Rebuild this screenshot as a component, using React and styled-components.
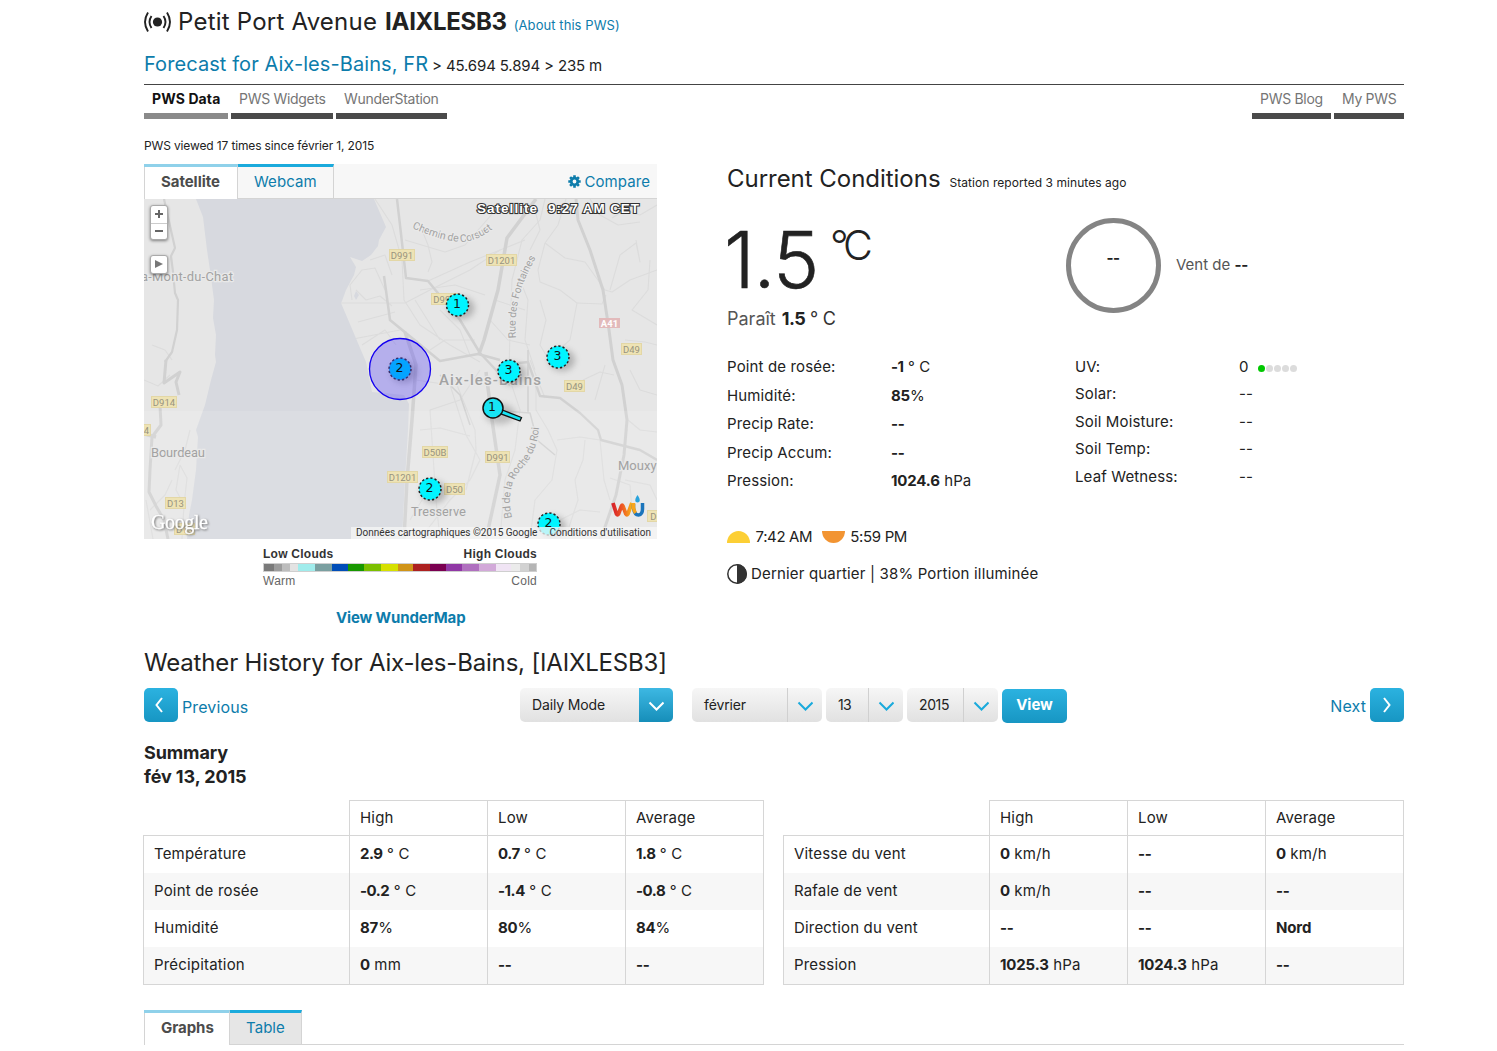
import React from "react";
import styled, { createGlobalStyle } from "styled-components";

const Global = createGlobalStyle`
  * { box-sizing: border-box; }
  body { margin: 0; background: #fff; color: #222; font-family: Inter, "Noto Sans", "Liberation Sans", sans-serif; font-size: 15px; white-space: nowrap; overflow: hidden; }
  a { color: #0d7cab; text-decoration: none; }
  h1, h2, h3 { margin: 0; font-weight: 400; }
`;

const Page = styled.main`
  width: 1260px;
  height: 1051px;
  margin-left: 144px;
  overflow: visible;
`;

/* Header */
const Station = styled.h1`
  display: flex;
  align-items: baseline;
  height: 44px;
  line-height: 43px;
  font-size: 24px;
  letter-spacing: 0.22px;
  svg { align-self: flex-start; margin: 11px 7px 0 0; flex: none; }
  b { letter-spacing: -0.3px; margin-left: 8px; }
  a { font-size: 13px; letter-spacing: 0.07px; margin-left: 7px; }
`;
const Place = styled.div`
  display: flex;
  align-items: baseline;
  height: 41px;
  line-height: 40px;
  border-bottom: 1px solid #444;
  font-size: 15px;
  letter-spacing: -0.15px;
  a { font-size: 20px; letter-spacing: 0.08px; margin-right: 4px; }
`;
const Nav = styled.nav`
  display: flex;
  gap: 3px;
  height: 34px;
`;
const NavItem = styled.a`
  width: ${(p) => p.$w}px;
  height: 34px;
  padding-left: 8px;
  line-height: 28px;
  font-size: 14px;
  font-weight: ${(p) => (p.$on ? 700 : 400)};
  letter-spacing: ${(p) => (p.$on ? 0.1 : -0.3)}px;
  border-bottom: 6px solid ${(p) => (p.$on ? "#8a8a8a" : "#4a4a4a")};
  && { color: ${(p) => (p.$on ? "#111" : "#757575")}; }
  margin-left: ${(p) => (p.$push ? "auto" : "0")};
`;
const Viewed = styled.p`
  margin: 0;
  height: 45px;
  padding-top: 18px;
  line-height: 18px;
  font-size: 12px;
  letter-spacing: -0.14px;
`;

/* Tabs */
const Tabs = styled.div`
  display: flex;
  height: 35px;
  background: ${(p) => (p.$tint ? "#f7f7f7" : "#fff")};
  border-bottom: 1px solid #d4d4d4;
`;
const Tab = styled.a`
  width: ${(p) => p.$w}px;
  height: ${(p) => (p.$on ? 35 : 34)}px;
  padding-left: ${(p) => (p.$on ? 17 : 16)}px;
  line-height: 29px;
  font-weight: ${(p) => (p.$on ? 700 : 400)};
  letter-spacing: ${(p) => (p.$on ? -0.05 : 0.06)}px;
  background: ${(p) => (p.$on ? "#fff" : p.$bg)};
  border-top: 3px solid ${(p) => (p.$on ? "#8fd1ea" : "#1aaadc")};
  border-right: 1px solid #d4d4d4;
  box-shadow: ${(p) => (p.$on ? "inset 1px 0 #d4d4d4" : "none")};
  && { color: ${(p) => (p.$on ? "#4c4c4c" : "#0d7cab")}; }
`;
const Compare = styled.a`
  display: flex;
  align-items: center;
  gap: 3px;
  margin: 0 7px 0 auto;
  letter-spacing: 0.09px;
`;

/* Main columns */
const Columns = styled.section`
  display: grid;
  grid-template-columns: 513px 1fr;
  column-gap: 70px;
  height: 474px;
`;
const MapBox = styled.div`
  position: relative;
  height: 340px;
  overflow: hidden;
  svg { display: block; }
`;
const ZoomControl = styled.div`
  position: absolute;
  left: 6px;
  top: ${(p) => p.$top}px;
  width: 18px;
  border: 1px solid #aaa;
  border-radius: 3px;
  background: #fff;
  box-shadow: 0 1px 3px rgba(0, 0, 0, 0.45);
  div { height: 16.5px; display: grid; place-items: center; }
  div + div { border-top: 1px solid #ccc; }
`;
const Attribution = styled.div`
  position: absolute;
  right: 0;
  bottom: 0;
  width: 306px;
  height: 12px;
  display: flex;
  gap: 12px;
  padding-left: 5px;
  line-height: 12px;
  background: rgba(245, 245, 245, 0.75);
  font-family: Roboto, "Liberation Sans", sans-serif;
  font-size: 10px;
  letter-spacing: 0.01px;
  color: #333;
`;
const Legend = styled.div`
  width: 274px;
  margin: 8px 0 0 119px;
  font-family: "Liberation Sans", sans-serif;
  font-size: 12px;
  color: #555;
`;
const LegendRow = styled.div`
  display: flex;
  justify-content: space-between;
  height: ${(p) => (p.$bold ? 16 : 14)}px;
  line-height: ${(p) => (p.$bold ? 15 : 19)}px;
  font-weight: ${(p) => (p.$bold ? 700 : 400)};
  font-size: 12px;
  letter-spacing: 0.25px;
  color: ${(p) => (p.$bold ? "#333" : "#666")};
`;
const Scale = styled.div`
  display: flex;
  height: 9px;
  border: 1px solid #cfcfcf;
`;
const Swatch = styled.i`
  flex: ${(p) => p.$n} 0 0;
  background: ${(p) => p.$c};
`;
const MapLink = styled.a`
  display: block;
  margin: 22px 0 0 192px;
  line-height: 20px;
  font-weight: 700;
  letter-spacing: -0.14px;
`;

/* Conditions */
const CondTitle = styled.h2`
  display: flex;
  align-items: baseline;
  gap: 9px;
  height: 36px;
  line-height: 30px;
  font-size: 24px;
  letter-spacing: -0.03px;
  small { font-size: 12px; letter-spacing: 0.06px; }
`;
const Now = styled.div`
  display: grid;
  grid-template-columns: 339px 95px 1fr;
  height: 153px;
`;
const Temp = styled.div`
  display: flex;
  height: 108px;
  padding-top: 9px;
  line-height: 101px;
  font-size: 78px;
  font-weight: 300;
  letter-spacing: -1.3px;
  margin-left: -3px;
  -webkit-text-stroke: 0.6px #222;
`;
const Unit = styled.span`
  padding: 0 0 0 12px;
  font-size: 41px;
  font-weight: 300;
  line-height: 73px;
  letter-spacing: -5.3px;
  -webkit-text-stroke: 0;
`;
const Feels = styled.div`
  line-height: 22px;
  font-size: 18px;
  color: #555;
  b { letter-spacing: -0.6px; color: #222; margin-left: 1px; }
  span { color: #333; letter-spacing: -0.25px; }
`;
const Dial = styled.div`
  width: 95px;
  height: 95px;
  margin-top: 18px;
  border: 5px solid #848484;
  border-radius: 50%;
  text-align: center;
  line-height: 69px;
  padding-right: 1px;
  font-weight: 700;
  letter-spacing: -0.5px;
`;
const Wind = styled.div`
  padding: 55px 0 0 15px;
  line-height: 20px;
  color: #555;
  b { color: #222; letter-spacing: -0.3px; }
`;
const Readings = styled.div`
  display: grid;
  grid-template-columns: 348px 1fr;
  height: 174px;
`;
const ReadingList = styled.dl`
  display: grid;
  grid-template-columns: 164px 1fr;
  grid-auto-rows: ${(p) => p.$row}px;
  align-content: start;
  align-items: center;
  margin: ${(p) => p.$up}px 0 0;
  dt { letter-spacing: 0.14px; }
  dd { margin: 0; letter-spacing: 0.1px; display: flex; align-items: center; white-space: pre; }
`;
const Num = styled.b`
  letter-spacing: ${(p) => (p.$tight ? -0.45 : -0.15)}px;
`;
const Dots = styled.span`
  display: flex;
  gap: 1px;
  margin: 4px 0 0 9px;
`;
const Dot = styled.i`
  width: 7px;
  height: 7px;
  border-radius: 50%;
  background: ${(p) => (p.$on ? "#00c800" : "#dcdcdc")};
`;
const Astro = styled.div`
  display: flex;
  align-items: center;
  height: 20px;
  line-height: 18px;
  letter-spacing: ${(p) => (p.$moon ? 0.17 : -0.35)}px;
  margin-bottom: 17px;
  svg { flex: none; margin-right: ${(p) => (p.$moon ? 4 : 5.5)}px; }
  span { margin-right: 9.5px; }
`;

/* History */
const HistTitle = styled.h2`
  height: 50px;
  line-height: 50px;
  font-size: 24px;
  letter-spacing: -0.17px;
`;
const Toolbar = styled.div`
  display: flex;
  height: 54px;
  align-items: flex-start;
`;
const Step = styled.a`
  display: flex;
  gap: 4px;
  width: ${(p) => p.$w}px;
  justify-content: ${(p) => (p.$end ? "flex-end" : "flex-start")};
  margin-left: ${(p) => (p.$end ? "auto" : "0")};
  font-size: 16px;
  letter-spacing: 0.12px;
  line-height: ${(p) => (p.$end ? 36 : 38)}px;
`;
const StepIcon = styled.span`
  display: grid;
  place-items: center;
  width: 34px;
  height: 34px;
  padding-right: ${(p) => (p.$back ? 4 : 0)}px;
  border-radius: 5px;
  background: linear-gradient(#2bb2e0, #1796c3);
`;
const Select = styled.div`
  display: flex;
  justify-content: space-between;
  width: ${(p) => p.$w}px;
  height: 34px;
  margin-right: ${(p) => p.$gap}px;
  padding-left: 12px;
  border-radius: 5px;
  overflow: hidden;
  background: linear-gradient(#f6f6f6, #e1e1e1);
  font-size: 14px;
  line-height: 34px;
  letter-spacing: ${(p) => p.$ls}px;
`;
const Arrow = styled.span`
  display: grid;
  place-items: center;
  width: ${(p) => (p.$blue ? 34 : 35)}px;
  background: ${(p) => (p.$blue ? "linear-gradient(#3db8e3, #168eb9)" : "none")};
  border-left: ${(p) => (p.$blue ? "0" : "1px solid #d0d0d0")};
`;
const ViewBtn = styled.button`
  width: 65px;
  height: 34px;
  margin: 1px 0 0;
  padding: 0 0 3px;
  border: 0;
  border-radius: 5px;
  background: linear-gradient(#2bb2e0, #1796c3);
  color: #fff;
  font: 700 15px Inter, sans-serif;
`;
const Summary = styled.h3`
  height: 58px;
  line-height: 24px;
  font-size: 18px;
  font-weight: 700;
  letter-spacing: -0.1px;
  margin-top: -1px;
`;
const Tables = styled.div`
  display: flex;
  gap: 19px;
  margin: 1px 0 0 -1px;
  height: 210px;
`;
const Table = styled.table`
  width: 621px;
  height: 185px;
  table-layout: fixed;
  border-collapse: collapse;
  font-size: 15px;
  letter-spacing: 0.18px;
  th, td { padding: 0 0 2px 10px; text-align: left; font-weight: 400; border: solid #d6d6d6; border-width: 0 1px; }
  thead th { border-width: 1px; height: 35px; }
  thead th:first-child { border-top: 0; border-left: 0; width: 206px; }
  tbody tr { height: 37px; }
  tbody tr:nth-child(even) { background: #f7f7f7; }
  tbody tr:last-child td { border-bottom-width: 1px; }
`;

const Chevron = ({ d, c = "#fff" }) => (
  <svg width="16" height="16" viewBox="0 0 16 16" fill="none" stroke={c} strokeWidth="2"><path d={d} /></svg>
);
const DOWN = "M1.500 5.500 8.500 12.500l7-7";

const MINOR = [
  "M153 539 146 500M144 380 158 386 170 375M152 345 165 350 172 360M180 465 176 490 184 505 182 539M180 465 187 478 184 505M150 510 165 495 172 480M190 430 185 450 175 470",
  "M341 303 405 303 430 290 470 270 500 250M352 300 350 285 362 270 375 268 385 290M358 322 395 312M348 340 400 330M356 290 366 300 380 296 392 306M362 345 385 330 396 345M370 260 385 255 392 275",
  "M375 199 392 225 402 260 404 300 420 325 450 345 480 362M420 225 428 245 432 262 428 272M405 240 445 252 465 245 500 205M428 281 470 262 525 240M415 300 440 340M420 290 455 285 485 295",
  "M545 199 540 220 522 240 512 280 510 330 509 372M566 199 558 225 545 243 538 270 540 282 560 290 577 303 570 340 556 352M545 243 565 258 585 262 605 290 612 292 630 280 657 270M610 290 620 255 636 243 640 262 636 240M657 205 640 215 625 210 612 218",
  "M520 280 528 300 525 340 535 370M540 300 546 320 540 345 552 365M577 303 602 304 606 295M530 250 540 230 535 210M590 199 600 215 618 225 640 222M650 260 648 290 632 310 657 325M625 340 645 342 657 345",
  "M480 370 460 400 430 410 432 440 436 500 440 539M416 380 450 385 466 435 480 460 470 480 450 500 420 539M455 380 475 430 476 450 466 490M420 430 440 428 470 436M425 480 422 500 410 520",
  "M510 380 520 410 515 450 505 480 500 539M536 380 536 410 548 430 557 450 552 480 535 500 530 539M557 440 580 437 600 440M585 440 583 460 575 480 578 500 565 539M600 440 604 480 610 500M625 480 650 485 657 500M605 365 595 400M545 398 530 360M610 478 630 485 632 510",
  "M440 310 460 330 470 355M430 350 445 340 475 340M495 300 525 310M490 320 508 340 530 345M583 380 600 372 614 375M630 370 640 390 657 395M628 420 640 430 657 432M560 520 580 510 600 512",
];
const MAJOR = [
  ["M164 199 168 217 175 248 171 256 173 272 175 293 178 300 177 330 172 352 165 362", 2.2],
  ["M166 360 164 383 180 372 176 382 179 395M160 405 161 425 152 437 150 470 149 492 156 506 164 520 168 539", 3],
  ["M144 434 156 437", 3.5],
  ["M536 199 507 238 498 290 484 340 479 354", 3.5],
  ["M397 199 400 225 406 278 428 281 460 320 480 353 510 385", 2.5],
  ["M384 276 390 320 412 338 440 361 478 354 500 360", 2.5],
  ["M405 332 416 365 412 420 407 480 404 539", 3.5],
  ["M576 199 578 220 590 250 603 290 609 330 613 360 622 385 627 420 624 455 616 495 604 530 600 539", 3],
  ["M486 372 492 420 500 475 492 512 486 539", 3.5],
  ["M500 365 528 362 540 396 560 398 580 413 598 430 601 440 640 450 657 460", 2.4],
  ["M528 350 528 413M492 410 530 413 537 440 555 455", 1.5],
  ["M440 375 460 395 470 425", 1.5],
];
const ROADS = [
  ["D991", 389, 249, 26], ["D1201", 486, 254, 31], ["D991", 431, 293, 27], ["D49", 621, 343, 21], ["D49", 564, 380, 21],
  ["D914", 151, 396, 26], ["4", 142, 424, 9], ["D50B", 422, 446, 26], ["D991", 485, 451, 25], ["D1201", 387, 471, 31],
  ["D50", 444, 483, 21], ["D13", 165, 497, 21], ["D13", 174, 523, 21], ["D5", 647, 510, 18],
];
const MARKS = [["1", 457.5, 305], ["3", 558, 357], ["3", 509, 371], ["2", 430, 489], ["2", 549, 524]];

const MapLabel = styled.text`
  font-family: Roboto, sans-serif;
  font-size: ${(p) => p.$s || 13}px;
  font-weight: ${(p) => p.$w || 400};
  fill: #a2a2a2;
  stroke: #e9e9e9;
  stroke-width: 2.5px;
  paint-order: stroke;
`;
const RoadText = styled.text`
  font-family: Roboto, sans-serif;
  font-size: 9.5px;
  text-anchor: middle;
  fill: ${(p) => p.$c || "#98937f"};
  font-weight: ${(p) => (p.$c ? 700 : 400)};
`;
const MarkText = styled.text`
  font-family: "DejaVu Sans", sans-serif;
  font-size: 12.5px;
  text-anchor: middle;
  fill: #111;
`;
const Stamp = styled.text`
  font-family: "Liberation Sans", sans-serif;
  font-size: 13.5px;
  font-weight: 700;
  fill: #fff;
  stroke: #333;
  stroke-width: 2.2px;
  paint-order: stroke;
`;
const Wordmark = styled.text`
  font-family: "Liberation Serif", serif;
  font-size: 20px;
  fill: #fff;
  stroke: #fff;
  stroke-width: 0.3px;
  filter: drop-shadow(1px 1px 1px #777);
`;

function Mark({ n, x, y, fill = "#00f4ff" }) {
  return (
    <g>
      <ellipse cx={x + 4} cy={y + 3} rx="13" ry="11" fill="#555" opacity="0.35" filter="url(#soft)" />
      <circle cx={x} cy={y} r="11" fill={fill} stroke="#222" strokeWidth="1.500" strokeDasharray="2.200 2.120" />
      <MarkText x={x - 0.5} y={y + 3}>{n}</MarkText>
    </g>
  );
}

function AreaMap() {
  return (
    <svg width="513" height="340" viewBox="144 199 513 340">
      <defs>
        <filter id="soft" x="-50%" y="-50%" width="200%" height="200%"><feGaussianBlur stdDeviation="3" /></filter>
        <path id="corsuet" d="M412 228Q438 240 460 242Q476 242 494 228" />
        <path id="fontaines" d="M516 338Q512 296 537 256" />
        <path id="roche" d="M512 518Q504 484 526 464Q538 448 539 426" />
        <linearGradient id="warm"><stop offset="0" stopColor="#d8232a" /><stop offset=".5" stopColor="#ee5a24" /><stop offset="1" stopColor="#f9b41a" /></linearGradient>
      </defs>
      <path fill="#e6e6e6" d="M144 199h513v340H144z" />
      <g fill="none" stroke="#dcdcdc" strokeWidth="1.100" strokeLinejoin="round">{MINOR.map((d) => <path key={d} d={d} />)}</g>
      <g fill="none" stroke="#d1d1d1" strokeLinejoin="round">{MAJOR.map(([d, w]) => <path key={d} d={d} strokeWidth={w} />)}</g>
      <path fill="#d7d9df" d="M196 199 203 217 207 250 210 270 214 300 213 318 216 335 215 355 216 362 211 380 205 405 196 430 198 437 196 470 192 500 189 515 187 539H402L405 480 408 430 409 404 404 395 372 392 366 362 341 303 342 301 346 290 354 275 356 267 350 257 362 261 371 255 378 246 379 240 386 227 374 199Z" />
      <path fill="#d7d9df" d="m356 291 3 4-3 5-2-4z" />
      <path fill="#fff" opacity=".12" d="M144 411h513v128H144z" />
      {ROADS.map(([t, x, y, w]) => (
        <g key={t + x}>
          <rect x={x + 0.5} y={y + 0.5} width={w - 1} height="11" fill="#eee3b4" stroke="#e3d7a6" />
          <RoadText x={x + w / 2} y={y + 9.5}>{t}</RoadText>
        </g>
      ))}
      <rect x="599" y="318" width="21" height="10" fill="#e2babb" />
      <RoadText $c="#fff" x="609.500" y="326.500">A41</RoadText>
      <MapLabel x="141" y="280.500" textLength="92">a-Mont-du-Chat</MapLabel>
      <MapLabel $s={15} $w={500} x="439" y="384.500" textLength="102">Aix-les-Bains</MapLabel>
      <MapLabel x="151" y="457" textLength="54">Bourdeau</MapLabel>
      <MapLabel x="411" y="515.500" textLength="55">Tresserve</MapLabel>
      <MapLabel x="618" y="469.500">Mouxy</MapLabel>
      <MapLabel $s={10.5}><textPath href="#corsuet" textLength="86">Chemin de Corsuet</textPath></MapLabel>
      <MapLabel $s={10.5}><textPath href="#fontaines" textLength="84">Rue des Fontaines</textPath></MapLabel>
      <MapLabel $s={10.5}><textPath href="#roche" textLength="98">Bd de la Roche du Roi</textPath></MapLabel>
      {MARKS.map(([n, x, y]) => <Mark key={x} n={n} x={x} y={y} />)}
      <Mark n="2" x={400} y={369} fill="#00b4ff" />
      <circle cx="400" cy="369" r="30.500" fill="#5a48f5" fillOpacity=".35" stroke="#1400f0" strokeWidth="1.300" />
      <circle cx="400" cy="369" r="10" fill="#00a8ff" opacity=".85" />
      <MarkText x="399.500" y="372">2</MarkText>
      <ellipse cx="500" cy="414" rx="15" ry="10" fill="#555" opacity=".3" filter="url(#soft)" />
      <path d="m501 409.500 20.500 8-1.500 3.500-20-7.500z" fill="#16e4f4" stroke="#111" strokeWidth="1.300" />
      <circle cx="493" cy="408" r="10" fill="#16e4f4" stroke="#111" strokeWidth="1.500" />
      <MarkText x="492" y="411">1</MarkText>
      <Stamp x="477" y="213" textLength="60">Satellite</Stamp>
      <Stamp x="548" y="213" textLength="91">9:27 AM CET</Stamp>
      <Wordmark x="151" y="529" textLength="57">Google</Wordmark>
      <path d="m613 503 3.500 11q1 1.500 2 0l3-8q.7-1.500 1.400 0l3 8q1 1.500 2 0l4-11" fill="none" stroke="url(#warm)" strokeWidth="3.800" strokeLinejoin="round" />
      <path d="M633.500 504v4q1 7 5 7 4-.5 4-6v-6" fill="none" stroke="#1b75bb" strokeWidth="3.500" />
      <path d="M633.500 503v4q.5 4 2 6" fill="none" stroke="#f9a51a" strokeWidth="3.500" />
      <path d="M637.500 495q3 4 2 6.500-2 2-4 0-1-2.500 2-6.500z" fill="#29a3dc" />
    </svg>
  );
}

const SCALE = [[10, "#7a7a7a"], [8, "#9c9c9c"], [8, "#bdbdbd"], [8.5, "#e3e3e3"], [16.5, "#a0ecec"], [17, "#7a9fa0"], [16.5, "#004db8"], [16, "#189700"], [17, "#7bbf00"], [16.5, "#d6e000"], [16, "#d09418"], [16.5, "#ad2020"], [16.5, "#7a0050"], [16, "#9038a5"], [17, "#b070bf"], [16.5, "#d2a9d9"], [15.5, "#f0e4f4"], [9, "#ebebeb"], [8.5, "#d2d2d2"], [7.5, "#b5b5b5"]];

const deg = " ° C";
const T1 = [
  ["Température", ["2.9", deg], ["0.7", deg], ["1.8", deg]],
  ["Point de rosée", ["-0.2", deg], ["-1.4", deg], ["-0.8", deg]],
  ["Humidité", ["87", "%"], ["80", "%"], ["84", "%"]],
  ["Précipitation", ["0", " mm"], ["--", ""], ["--", ""]],
];
const T2 = [
  ["Vitesse du vent", ["0", " km/h"], ["--", ""], ["0", " km/h"]],
  ["Rafale de vent", ["0", " km/h"], ["--", ""], ["--", ""]],
  ["Direction du vent", ["--", ""], ["--", ""], ["Nord", ""]],
  ["Pression", ["1025.3", " hPa"], ["1024.3", " hPa"], ["--", ""]],
];
const Value = ({ v: [n, u] }) => <><Num $tight={u === deg}>{n}</Num>{u}</>;

function SummaryTable({ rows }) {
  return (
    <Table>
      <thead><tr><th /><th>High</th><th>Low</th><th>Average</th></tr></thead>
      <tbody>
        {rows.map(([name, ...vals]) => (
          <tr key={name}><td>{name}</td>{vals.map((v, i) => <td key={i}><Value v={v} /></td>)}</tr>
        ))}
      </tbody>
    </Table>
  );
}

const LEFT = [["Point de rosée:", ["-1", deg]], ["Humidité:", ["85", "%"]], ["Precip Rate:", ["--", ""]], ["Precip Accum:", ["--", ""]], ["Pression:", ["1024.6", " hPa"]]];
const RIGHT = ["Solar:", "Soil Moisture:", "Soil Temp:", "Leaf Wetness:"];

export default function App() {
  return (
    <Page>
      <Global />
      <Station>
        <svg width="27" height="22" viewBox="0 0 27 22" fill="none" stroke="#222" strokeWidth="1.900">
          <circle cx="13.500" cy="11" r="4.600" fill="#222" stroke="none" />
          <path d="M7.500 5Q3.500 11 7.500 17M19.500 5q4 6 0 12M4 1.500q-6 9.500 0 19M23 1.500q6 9.500 0 19" />
        </svg>
        Petit Port Avenue <b>IAIXLESB3</b> <a>(About this PWS)</a>
      </Station>
      <Place><a>Forecast for Aix-les-Bains, FR</a> &gt; 45.694 5.894 &gt; 235 m</Place>
      <Nav>
        <NavItem $w={84} $on>PWS Data</NavItem>
        <NavItem $w={102}>PWS Widgets</NavItem>
        <NavItem $w={111}>WunderStation</NavItem>
        <NavItem $w={79} $push>PWS Blog</NavItem>
        <NavItem $w={70}>My PWS</NavItem>
      </Nav>
      <Viewed>PWS viewed 17 times since février 1, 2015</Viewed>

      <Columns>
        <div>
          <Tabs $tint>
            <Tab $w={94} $on>Satellite</Tab>
            <Tab $w={96} $bg="#f7f7f7">Webcam</Tab>
            <Compare>
              <svg width="13" height="13" viewBox="-6.500 -6.500 13 13">
                <circle r="3.300" fill="none" stroke="#0d7cab" strokeWidth="2.800" />
                <g stroke="#0d7cab" strokeWidth="2.600">
                  <path d="M0-6.200V-4M0 6.200V4M-6.200 0H-4M6.200 0H4M-4.400-4.400-3-3M4.400 4.400 3 3M-4.400 4.400-3 3M4.400-4.400 3-3" />
                </g>
              </svg>
              Compare
            </Compare>
          </Tabs>
          <MapBox>
            <AreaMap />
            <ZoomControl $top={6}>
              <div><svg width="10" height="10" stroke="#666" strokeWidth="2"><path d="M1 5h8M5 1v8" /></svg></div>
              <div><svg width="10" height="10" stroke="#666" strokeWidth="2"><path d="M1 5h8" /></svg></div>
            </ZoomControl>
            <ZoomControl $top={56}>
              <div><svg width="10" height="10" fill="#777"><path d="M1 1 9 5 1 9z" /></svg></div>
            </ZoomControl>
            <Attribution><span>Données cartographiques ©2015 Google</span><span>Conditions d'utilisation</span></Attribution>
          </MapBox>
          <Legend>
            <LegendRow $bold><span>Low Clouds</span><span>High Clouds</span></LegendRow>
            <Scale>{SCALE.map(([n, c]) => <Swatch key={c} $n={n} $c={c} />)}</Scale>
            <LegendRow><span>Warm</span><span>Cold</span></LegendRow>
          </Legend>
          <MapLink>View WunderMap</MapLink>
        </div>

        <div>
          <CondTitle>Current Conditions <small>Station reported 3 minutes ago</small></CondTitle>
          <Now>
            <div>
              <Temp>1.5<Unit>°C</Unit></Temp>
              <Feels>Paraît <b>1.5</b><span> ° C</span></Feels>
            </div>
            <Dial>--</Dial>
            <Wind>Vent de <b>--</b></Wind>
          </Now>
          <Readings>
            <ReadingList $row={28.5} $up={-0.5}>
              {LEFT.map(([k, v]) => <React.Fragment key={k}><dt>{k}</dt><dd><Value v={v} /></dd></React.Fragment>)}
            </ReadingList>
            <ReadingList $row={27.5} $up={-0.3}>
              <dt>UV:</dt>
              <dd>0<Dots>{[1, 0, 0, 0, 0].map((on, i) => <Dot key={i} $on={on} />)}</Dots></dd>
              {RIGHT.map((k) => <React.Fragment key={k}><dt>{k}</dt><dd>--</dd></React.Fragment>)}
            </ReadingList>
          </Readings>
          <Astro>
            <svg width="23" height="12" viewBox="0 0 23 12"><path d="M0 12a11.500 12 0 0 1 23 0z" fill="#fccf35" /></svg>
            <span>7:42 AM</span>
            <svg width="23" height="12" viewBox="0 0 23 12"><path d="M0 0a11.500 12 0 0 0 23 0z" fill="#f29432" /></svg>
            <span>5:59 PM</span>
          </Astro>
          <Astro $moon>
            <svg width="20" height="20" viewBox="0 0 20 20"><circle cx="10" cy="10" r="9.200" fill="#fff" stroke="#333" strokeWidth="1.500" /><path d="M10 0a10 10 0 0 1 0 20z" fill="#333" /></svg>
            Dernier quartier | 38% Portion illuminée
          </Astro>
        </div>
      </Columns>

      <HistTitle>Weather History for Aix-les-Bains, [IAIXLESB3]</HistTitle>
      <Toolbar>
        <Step $w={376}><StepIcon $back><Chevron d="M11 1 5.500 8 11 15" /></StepIcon>Previous</Step>
        <Select $w={153} $gap={19} $ls={-0.14}>Daily Mode<Arrow $blue><Chevron d={DOWN} /></Arrow></Select>
        <Select $w={130} $gap={4} $ls={-0.12}>février<Arrow><Chevron d={DOWN} c="#1aaadc" /></Arrow></Select>
        <Select $w={77} $gap={4} $ls={-0.6}>13<Arrow><Chevron d={DOWN} c="#1aaadc" /></Arrow></Select>
        <Select $w={91} $gap={4} $ls={-0.39}>2015<Arrow><Chevron d={DOWN} c="#1aaadc" /></Arrow></Select>
        <ViewBtn>View</ViewBtn>
        <Step $w={90} $end>Next<StepIcon><Chevron d="M5 1 10.500 8 5 15" /></StepIcon></Step>
      </Toolbar>
      <Summary>Summary<br />fév 13, 2015</Summary>
      <Tables><SummaryTable rows={T1} /><SummaryTable rows={T2} /></Tables>
      <Tabs>
        <Tab $w={86} $on>Graphs</Tab>
        <Tab $w={72} $bg="#e6e6e6">Table</Tab>
      </Tabs>
    </Page>
  );
}
